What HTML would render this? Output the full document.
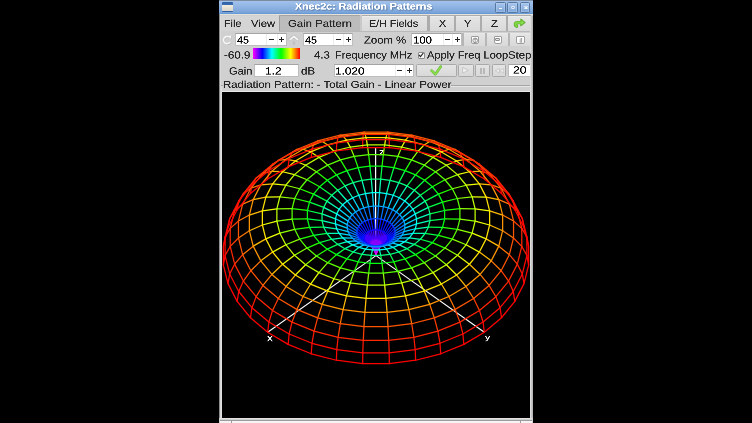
<!DOCTYPE html>
<html><head><meta charset="utf-8">
<style>
html,body{margin:0;padding:0;background:#000;width:752px;height:423px;overflow:hidden;position:relative;font-family:"Liberation Sans",sans-serif;}
.a{position:absolute;box-sizing:border-box;}
.t{position:absolute;white-space:nowrap;line-height:1;transform-origin:0 0;will-change:transform;text-rendering:geometricPrecision;-webkit-text-stroke:0.7px currentColor;}
.tb{top:2px;width:10.6px;height:10.6px;border:1px solid #56759f;background:linear-gradient(#a7c6ee,#7ea6d9);border-radius:1.5px;box-shadow:inset 0 0 0 0.6px rgba(200,220,250,.6);}
.bf{background:linear-gradient(#e4e4e4,#d9d9d9);}
.btn{background:linear-gradient(#e4e4e4,#d8d8d8);border:1px solid #a9a9a9;border-radius:1.5px;}
.ent{background:#fff;border:1px solid #bdbdbd;border-top-color:#a4a4a4;}
.sep{position:absolute;top:0;bottom:0;width:1px;background:#ececec;}
.mi{position:absolute;height:1.2px;width:5.2px;background:#1e1e1e;}
.pv{position:absolute;width:1.2px;height:5.2px;background:#1e1e1e;}
.ico{position:absolute;box-sizing:border-box;width:8.4px;height:8.5px;background:#fff;border:0.8px solid #9d9d9d;border-radius:1px 1px 2px 2px;}
</style></head><body>
<!-- window body -->
<div class="a" style="left:219px;top:0;width:314px;height:423px;background:#d0d0d0"></div>
<!-- title bar -->
<div class="a" style="left:219px;top:0;width:314px;height:14.3px;background:linear-gradient(#7d8ba0 0,#7d8ba0 6%,#a2c2ec 8%,#8fb3e2 50%,#7ba5d9 88%,#6096d8 100%)"></div>
<div class="a" style="left:219px;top:14.3px;width:314px;height:1.2px;background:#e6e2da"></div>
<div class="a" style="left:222px;top:2.4px;width:10.6px;height:9.4px;background:linear-gradient(#2f60a6 0,#3a6cb2 27%,#f4ede0 29%,#dbd5ca 88%,#2f60a6 90%);border-radius:1px"></div>
<div class="a tb" style="left:495.1px"></div>
<div class="a tb" style="left:507.4px"></div>
<div class="a tb" style="left:519.9px"></div>
<div class="a" style="left:498.7px;top:7.6px;width:3.4px;height:1.5px;background:#f2f4f8"></div>
<div class="a" style="left:510.7px;top:5.9px;width:3.9px;height:3px;border:1.1px solid #f2f4f8;border-radius:1.2px"></div>
<svg class="a" style="left:523.6px;top:5.7px" width="4" height="3.6" viewBox="0 0 4 3.6"><path d="M0.4 0.3L3.6 3.3M3.6 0.3L0.4 3.3" stroke="#f2f4f8" stroke-width="1.3"/></svg>

<!-- row 1 -->
<div class="a" style="left:219px;top:15.5px;width:60px;height:15.9px;background:#d5d5d5"></div>
<div class="a" style="left:279.1px;top:15.4px;width:252px;height:16.2px;background:#acacac"></div>
<div class="a" style="left:279.1px;top:15.4px;width:80.9px;height:15.9px;background:#bcbcbc;border-left:1px solid #9b9b9b;border-top:1px solid #a4a4a4;border-radius:1.5px"></div>
<div class="a" style="left:360px;top:15.4px;width:2.2px;height:15.9px;background:#c9c9c9"></div>
<div class="a bf" style="left:362.2px;top:15.5px;width:65.1px;height:15.4px;border-top:1px solid #ececec"></div>
<div class="a bf" style="left:429.6px;top:15.5px;width:24.1px;height:15.4px;border-top:1px solid #ececec"></div>
<div class="a bf" style="left:456px;top:15.5px;width:23.7px;height:15.4px;border-top:1px solid #ececec"></div>
<div class="a bf" style="left:482px;top:15.5px;width:23.7px;height:15.4px;border-top:1px solid #ececec"></div>
<div class="a bf" style="left:508.2px;top:15.5px;width:22.8px;height:15.4px;border-top:1px solid #ececec"></div>
<div class="a" style="left:279px;top:31.3px;width:252px;height:1px;background:#b9b9b9"></div>
<svg class="a" style="left:508px;top:15px" width="20" height="15" viewBox="0 0 20 15"><path d="M8.6 11.2 C6.6 9.8 6.8 7.6 10 7.6 L13.6 7.6" fill="none" stroke="#55a622" stroke-width="3.3" stroke-linecap="round"/><path d="M12.8 3.9 L17.3 7.5 L12.8 11.1Z" fill="#6cc430" stroke="#55a622" stroke-width="0.8" stroke-linejoin="round"/><path d="M8.6 11.2 C6.6 9.8 6.8 7.6 10 7.6 L13.6 7.6" fill="none" stroke="#80d844" stroke-width="2.1" stroke-linecap="round"/><path d="M13.4 5.6 L15.8 7.5 L13.4 9.4Z" fill="#8ee058"/></svg>

<!-- row 2 -->
<svg class="a" style="left:219px;top:32px" width="16" height="16" viewBox="0 0 16 16"><g transform="translate(0.35,0.45)" opacity="0.55"><path d="M9.9 5 A3.6 3.6 0 1 0 11.2 9.9" fill="none" stroke="#a0a0a0" stroke-width="1.9"/><path d="M8.9 4 L12.4 3.4 L11.8 7Z" fill="#a0a0a0"/></g><path d="M9.9 5 A3.6 3.6 0 1 0 11.2 9.9" fill="none" stroke="#f7f7f7" stroke-width="1.6"/><path d="M8.9 4 L12.4 3.4 L11.8 7Z" fill="#f7f7f7"/></svg>
<div class="a ent" style="left:234.9px;top:32.9px;width:51.8px;height:13px"><div class="sep" style="left:30.4px"></div><div class="sep" style="left:40.7px"></div></div>
<div class="mi" style="left:268.7px;top:39.3px"></div><div class="mi" style="left:279px;top:39.3px"></div><div class="pv" style="left:281px;top:37.3px"></div>
<svg class="a" style="left:286px;top:32px" width="16" height="16" viewBox="0 0 16 16"><path d="M4.2 7.6 L7.95 4.3 L11.7 7.6" fill="none" stroke="#b4b4b4" stroke-width="2.7" stroke-linecap="round" stroke-linejoin="round"/><path d="M4.2 7.6 L7.95 4.3 L11.7 7.6" fill="none" stroke="#fafafa" stroke-width="1.6" stroke-linecap="round" stroke-linejoin="round"/><path d="M6.7 10.5 L7.95 9.4 L9.2 10.5" fill="none" stroke="#b9b9b9" stroke-width="1"/><rect x="6.9" y="11.2" width="2.1" height="1.1" fill="#b3b3b3"/></svg>
<div class="a ent" style="left:302.6px;top:32.8px;width:50.2px;height:12.9px"><div class="sep" style="left:29.7px"></div><div class="sep" style="left:39.9px"></div></div>
<div class="mi" style="left:335.6px;top:39.3px"></div><div class="mi" style="left:345.9px;top:39.3px"></div><div class="pv" style="left:347.9px;top:37.3px"></div>
<div class="a ent" style="left:411.3px;top:32.8px;width:51px;height:13.2px"><div class="sep" style="left:30.3px"></div><div class="sep" style="left:40.1px"></div></div>
<div class="mi" style="left:444.7px;top:39.3px"></div><div class="mi" style="left:454.7px;top:39.3px"></div><div class="pv" style="left:456.7px;top:37.3px"></div>
<div class="a" style="left:462.2px;top:32.6px;width:69px;height:13.8px;background:#b6b6b6"></div>
<div class="a bf" style="left:463.9px;top:32.6px;width:21.1px;height:13.5px;border-top:1px solid #e9e9e9"></div>
<div class="a bf" style="left:486.8px;top:32.6px;width:21.2px;height:13.5px;border-top:1px solid #e9e9e9"></div>
<div class="a bf" style="left:509.9px;top:32.6px;width:21.1px;height:13.5px;border-top:1px solid #e9e9e9"></div>
<div class="ico" style="left:470.5px;top:35.7px"></div>
<div class="ico" style="left:493.5px;top:35.7px"></div>
<div class="ico" style="left:516.4px;top:35.7px"></div>
<svg class="a" style="left:471.5px;top:36.6px" width="6.4" height="6.4" viewBox="0 0 6.4 6.4"><circle cx="3.2" cy="3.4" r="2.3" fill="none" stroke="#8a8a8a" stroke-width="0.9"/><path d="M3.2 1.5V6M1.9 2.9L3.2 1.5L4.5 2.9" fill="none" stroke="#8a8a8a" stroke-width="0.8"/></svg>
<div class="a" style="left:495.2px;top:38.3px;width:5px;height:2.6px;border:0.8px solid #8a8a8a;border-radius:1px;background:#e6e6e6"></div>
<svg class="a" style="left:517.6px;top:36.6px" width="6.4" height="6.4" viewBox="0 0 6.4 6.4"><path d="M2.2 5.8V2.6L3.6 1M3.6 1V5.8" fill="none" stroke="#8a8a8a" stroke-width="0.8"/></svg>

<!-- row 3 -->
<div class="a" style="left:253.3px;top:48.2px;width:46.3px;height:11.1px;background:linear-gradient(90deg,#ff00ff,#0000ff 20%,#00ffff 40%,#00ff00 60%,#ffff00 80%,#ff0000)"></div>
<div class="a" style="left:417.5px;top:51.6px;width:7.2px;height:7.3px;background:#f7f7f7;border:0.9px solid #8d8d8d;border-radius:1px"></div>
<svg class="a" style="left:418.2px;top:52.2px" width="6" height="6" viewBox="0 0 6 6"><path d="M0.9 2.9 L2.5 4.7 L5.3 1" fill="none" stroke="#1e1e1e" stroke-width="1.1"/></svg>

<!-- row 4 -->
<div class="a ent" style="left:253.8px;top:63.5px;width:45.5px;height:13.7px"></div>
<div class="a ent" style="left:333.6px;top:63.6px;width:80.1px;height:13px"><div class="sep" style="left:60px"></div><div class="sep" style="left:70.2px"></div></div>
<div class="mi" style="left:396.5px;top:69.9px"></div><div class="mi" style="left:406.7px;top:69.9px"></div><div class="pv" style="left:408.7px;top:67.9px"></div>
<div class="a btn" style="left:415.6px;top:63.6px;width:41.1px;height:13.6px"></div>
<svg class="a" style="left:429.6px;top:64.6px" width="12" height="11" viewBox="0 0 12 11"><path d="M1.6 5.6 L5.4 9.2 L10.8 1.6" fill="none" stroke="#62b02c" stroke-width="2.6" stroke-linejoin="round" stroke-linecap="round"/><path d="M1.6 5.6 L5.4 9.2 L10.8 1.6" fill="none" stroke="#8be04e" stroke-width="1.6" stroke-linejoin="round" stroke-linecap="round"/></svg>
<div class="a btn" style="left:458.3px;top:63.7px;width:15.7px;height:13.5px"></div>
<div class="a btn" style="left:475.1px;top:63.7px;width:15px;height:13.5px"></div>
<div class="a btn" style="left:491.6px;top:63.7px;width:14.6px;height:13.5px"></div>
<svg class="a" style="left:462px;top:67.3px" width="7" height="6.6" viewBox="0 0 7 6.6"><path d="M0.6 0.5 L6.4 3.3 L0.6 6.1Z" fill="#efefef" stroke="#b4b4b4" stroke-width="0.6"/></svg>
<div class="a" style="left:479.8px;top:68px;width:2px;height:5.6px;background:#efefef;border:0.5px solid #b8b8b8"></div>
<div class="a" style="left:483.3px;top:68px;width:2px;height:5.6px;background:#efefef;border:0.5px solid #b8b8b8"></div>
<svg class="a" style="left:494.8px;top:68.2px" width="9" height="5.4" viewBox="0 0 9 5.4"><path d="M4.3 0.4 L0.4 2.7 L4.3 5Z M8.6 0.4 L4.7 2.7 L8.6 5Z" fill="#efefef" stroke="#b4b4b4" stroke-width="0.5"/></svg>
<div class="a ent" style="left:508.4px;top:63.5px;width:22.9px;height:13.7px"></div>

<!-- frame -->
<div class="a" style="left:450.5px;top:84.6px;width:80px;height:1px;background:#a6a6a6"></div>
<div class="a" style="left:450.5px;top:85.6px;width:80px;height:1px;background:#e4e4e4"></div>
<div class="a" style="left:220px;top:84.6px;width:2.5px;height:1px;background:#a6a6a6"></div>
<div class="a" style="left:219px;top:14px;width:1px;height:409px;background:#8e8e8e"></div><div class="a" style="left:220px;top:15.5px;width:1px;height:407px;background:#dadada"></div><div class="a" style="left:220px;top:86px;width:2px;height:337px;background:linear-gradient(90deg,#d2d2d2,#e4e4e4)"></div>
<div class="a" style="left:530px;top:15.5px;width:3px;height:407.5px;background:linear-gradient(90deg,#e8e8e8,#c8c8c8 50%,#b0b0b0)"></div>
<div class="a" style="left:222px;top:91.2px;width:308px;height:1px;background:#e6e6e6"></div>
<div class="a" style="left:219px;top:418px;width:314px;height:5px;background:#d0d0d0"></div>
<div class="a" style="left:220px;top:418px;width:312px;height:1.4px;background:#e2e2e2"></div>
<div class="a" style="left:220px;top:420px;width:312px;height:0.6px;background:#9c9c9c"></div>
<div class="a" style="left:220px;top:420.6px;width:312px;height:2.4px;background:#f4f4f4"></div>
<div class="a" style="left:231.2px;top:420.6px;width:0.9px;height:2.4px;background:#9a9a9a"></div>
<div class="a" style="left:520.2px;top:420.6px;width:0.9px;height:2.4px;background:#9a9a9a"></div>
<div style="position:absolute;left:222px;top:92px;width:308px;height:326px;background:#000"></div><svg width="308" height="326" viewBox="0 0 308 326" style="position:absolute;left:222px;top:92px"><path stroke="#fff" stroke-width="1.1" d="M154.00 163.60L45.67 240.20M154.00 163.60L262.33 240.20"/><path stroke="#fff" stroke-width="1.2" d="M153.60 163.60L153.60 55.27"/></svg><div class="t" style="left:266.88px;top:333.40px;font-size:40.13px;color:#fff;transform:scale(0.29074,0.25)">x</div><div class="t" style="left:484.75px;top:334.01px;font-size:28.71px;color:#fff;transform:scale(0.35882,0.25)">y</div><div class="t" style="left:379.07px;top:147.30px;font-size:40.13px;color:#fff;transform:scale(0.26744,0.25)">z</div><svg width="308" height="326" viewBox="0 0 308 326" style="position:absolute;left:222px;top:92px"><g fill="none" stroke-width="1.25" stroke-linecap="round"><path stroke="#fa00ff" d="M154.00 163.60L153.93 162.83M154.00 163.60L153.94 162.84M154.00 163.60L153.96 162.85M154.00 163.60L153.97 162.85M154.00 163.60L153.99 162.85M154.00 163.60L154.01 162.85M154.00 163.60L154.03 162.85M154.00 163.60L154.04 162.85M154.00 163.60L154.06 162.84M154.00 163.60L154.07 162.83M154.00 163.60L154.08 162.82M154.00 163.60L154.09 162.81M154.00 163.60L154.10 162.80M154.00 163.60L154.10 162.79M154.00 163.60L154.10 162.77M154.00 163.60L154.10 162.76M154.00 163.60L154.09 162.75M154.00 163.60L154.08 162.74M154.00 163.60L154.07 162.73M154.00 163.60L154.06 162.72M154.00 163.60L154.04 162.72M154.00 163.60L154.03 162.71M154.00 163.60L154.01 162.71M154.00 163.60L153.99 162.71M154.00 163.60L153.97 162.71M154.00 163.60L153.96 162.72M154.00 163.60L153.94 162.72M154.00 163.60L153.93 162.73M154.00 163.60L153.92 162.74M154.00 163.60L153.91 162.75M154.00 163.60L153.90 162.76M154.00 163.60L153.90 162.77M154.00 163.60L153.90 162.79M154.00 163.60L153.90 162.80M154.00 163.60L153.91 162.81M154.00 163.60L153.92 162.82"/><path stroke="#e700ff" d="M153.93 162.83L153.43 160.78M153.94 162.84L153.54 160.85M153.96 162.85L153.66 160.90M153.97 162.85L153.79 160.93M153.99 162.85L153.93 160.95M154.01 162.85L154.07 160.95M154.03 162.85L154.21 160.93M154.04 162.85L154.34 160.90M154.06 162.84L154.46 160.85M154.07 162.83L154.57 160.78M154.08 162.82L154.66 160.71M154.09 162.81L154.73 160.62M154.10 162.80L154.77 160.53M154.10 162.79L154.80 160.43M154.10 162.77L154.80 160.33M154.10 162.76L154.77 160.24M154.09 162.75L154.73 160.14M154.08 162.74L154.66 160.06M154.07 162.73L154.57 159.98M154.06 162.72L154.46 159.92M154.04 162.72L154.34 159.87M154.03 162.71L154.21 159.84M154.01 162.71L154.07 159.82M153.99 162.71L153.93 159.82M153.97 162.71L153.79 159.84M153.96 162.72L153.66 159.87M153.94 162.72L153.54 159.92M153.93 162.73L153.43 159.98M153.92 162.74L153.34 160.06M153.91 162.75L153.27 160.14M153.90 162.76L153.23 160.24M153.90 162.77L153.20 160.33M153.90 162.79L153.20 160.43M153.90 162.80L153.23 160.53M153.91 162.81L153.27 160.62M153.92 162.82L153.34 160.71"/><path stroke="#c100ff" d="M153.43 160.78L152.12 157.92M153.54 160.85L152.48 158.13M153.66 160.90L152.88 158.29M153.79 160.93L153.31 158.40M153.93 160.95L153.77 158.46M154.07 160.95L154.23 158.46M154.21 160.93L154.69 158.40M154.34 160.90L155.12 158.29M154.46 160.85L155.52 158.13M154.57 160.78L155.88 157.92M154.66 160.71L156.18 157.67M154.73 160.62L156.41 157.38M154.77 160.53L156.57 157.08M154.80 160.43L156.65 156.75M154.80 160.33L156.65 156.43M154.77 160.24L156.57 156.10M154.73 160.14L156.41 155.80M154.66 160.06L156.18 155.51M154.57 159.98L155.88 155.26M154.46 159.92L155.52 155.05M154.34 159.87L155.12 154.89M154.21 159.84L154.69 154.78M154.07 159.82L154.23 154.72M153.93 159.82L153.77 154.72M153.79 159.84L153.31 154.78M153.66 159.87L152.88 154.89M153.54 159.92L152.48 155.05M153.43 159.98L152.12 155.26M153.34 160.06L151.82 155.51M153.27 160.14L151.59 155.80M153.23 160.24L151.43 156.10M153.20 160.33L151.35 156.43M153.20 160.43L151.35 156.75M153.23 160.53L151.43 157.08M153.27 160.62L151.59 157.38M153.34 160.71L151.82 157.67"/><path stroke="#8a00ff" d="M152.12 157.92L149.67 154.76M152.48 158.13L150.48 155.24M152.88 158.29L151.41 155.62M153.31 158.40L152.41 155.88M153.77 158.46L153.47 156.01M154.23 158.46L154.53 156.01M154.69 158.40L155.59 155.88M155.12 158.29L156.59 155.62M155.52 158.13L157.52 155.24M155.88 157.92L158.33 154.76M156.18 157.67L159.02 154.18M156.41 157.38L159.56 153.52M156.57 157.08L159.92 152.81M156.65 156.75L160.11 152.07M156.65 156.43L160.11 151.31M156.57 156.10L159.92 150.57M156.41 155.80L159.56 149.86M156.18 155.51L159.02 149.21M155.88 155.26L158.33 148.63M155.52 155.05L157.52 148.14M155.12 154.89L156.59 147.76M154.69 154.78L155.59 147.51M154.23 154.72L154.53 147.37M153.77 154.72L153.47 147.37M153.31 154.78L152.41 147.51M152.88 154.89L151.41 147.76M152.48 155.05L150.48 148.14M152.12 155.26L149.67 148.63M151.82 155.51L148.98 149.21M151.59 155.80L148.44 149.86M151.43 156.10L148.08 150.57M151.35 156.43L147.89 151.31M151.35 156.75L147.89 152.07M151.43 157.08L148.08 152.81M151.59 157.38L148.44 153.52M151.82 157.67L148.98 154.18"/><path stroke="#4300ff" d="M149.67 154.76L145.82 151.85M150.48 155.24L147.37 152.76M151.41 155.62L149.11 153.48M152.41 155.88L151.01 153.96M153.47 156.01L152.99 154.21M154.53 156.01L155.01 154.21M155.59 155.88L156.99 153.96M156.59 155.62L158.89 153.48M157.52 155.24L160.63 152.76M158.33 154.76L162.18 151.85M159.02 154.18L163.47 150.75M159.56 153.52L164.48 149.52M159.92 152.81L165.17 148.18M160.11 152.07L165.52 146.78M160.11 151.31L165.52 145.35M159.92 150.57L165.17 143.95M159.56 149.86L164.48 142.61M159.02 149.21L163.47 141.37M158.33 148.63L162.18 140.28M157.52 148.14L160.63 139.37M156.59 147.76L158.89 138.65M155.59 147.51L156.99 138.17M154.53 147.37L155.01 137.92M153.47 147.37L152.99 137.92M152.41 147.51L151.01 138.17M151.41 147.76L149.11 138.65M150.48 148.14L147.37 139.37M149.67 148.63L145.82 140.28M148.98 149.21L144.53 141.37M148.44 149.86L143.52 142.61M148.08 150.57L142.83 143.95M147.89 151.31L142.48 145.35M147.89 152.07L142.48 146.78M148.08 152.81L142.83 148.18M148.44 153.52L143.52 149.52M148.98 154.18L144.53 150.75"/><path stroke="#0012ff" d="M145.82 151.85L140.46 149.72M147.37 152.76L143.02 151.24M149.11 153.48L145.91 152.42M151.01 153.96L149.04 153.23M152.99 154.21L152.33 153.64M155.01 154.21L155.67 153.64M156.99 153.96L158.96 153.23M158.89 153.48L162.09 152.42M160.63 152.76L164.98 151.24M162.18 151.85L167.54 149.72M163.47 150.75L169.69 147.91M164.48 149.52L171.36 145.87M165.17 148.18L172.50 143.65M165.52 146.78L173.08 141.33M165.52 145.35L173.08 138.97M165.17 143.95L172.50 136.64M164.48 142.61L171.36 134.42M163.47 141.37L169.69 132.38M162.18 140.28L167.54 130.57M160.63 139.37L164.98 129.05M158.89 138.65L162.09 127.87M156.99 138.17L158.96 127.07M155.01 137.92L155.67 126.66M152.99 137.92L152.33 126.66M151.01 138.17L149.04 127.07M149.11 138.65L145.91 127.87M147.37 139.37L143.02 129.05M145.82 140.28L140.46 130.57M144.53 141.37L138.31 132.38M143.52 142.61L136.64 134.42M142.83 143.95L135.50 136.64M142.48 145.35L134.92 138.97M142.48 146.78L134.92 141.33M142.83 148.18L135.50 143.65M143.52 149.52L136.64 145.87M144.53 150.75L138.31 147.91"/><path stroke="#0072ff" d="M140.46 149.72L133.56 148.86M143.02 151.24L137.42 151.15M145.91 152.42L141.78 152.93M149.04 153.23L146.52 154.15M152.33 153.64L151.48 154.77M155.67 153.64L156.52 154.77M158.96 153.23L161.48 154.15M162.09 152.42L166.22 152.93M164.98 151.24L170.58 151.15M167.54 149.72L174.44 148.86M169.69 147.91L177.68 146.13M171.36 145.87L180.20 143.05M172.50 143.65L181.92 139.70M173.08 141.33L182.80 136.19M173.08 138.97L182.80 132.62M172.50 136.64L181.92 129.12M171.36 134.42L180.20 125.77M169.69 132.38L177.68 122.68M167.54 130.57L174.44 119.95M164.98 129.05L170.58 117.66M162.09 127.87L166.22 115.88M158.96 127.07L161.48 114.66M155.67 126.66L156.52 114.04M152.33 126.66L151.48 114.04M149.04 127.07L146.52 114.66M145.91 127.87L141.78 115.88M143.02 129.05L137.42 117.66M140.46 130.57L133.56 119.95M138.31 132.38L130.32 122.68M136.64 134.42L127.80 125.77M135.50 136.64L126.08 129.12M134.92 138.97L125.20 132.62M134.92 141.33L125.20 136.19M135.50 143.65L126.08 139.70M136.64 145.87L127.80 143.05M138.31 147.91L130.32 146.13"/><path stroke="#00daff" d="M133.56 148.86L125.23 149.66M137.42 151.15L130.66 152.88M141.78 152.93L136.80 155.39M146.52 154.15L143.47 157.10M151.48 154.77L150.45 157.97M156.52 154.77L157.55 157.97M161.48 154.15L164.53 157.10M166.22 152.93L171.20 155.39M170.58 151.15L177.34 152.88M174.44 148.86L182.77 149.66M177.68 146.13L187.33 145.81M180.20 143.05L190.88 141.47M181.92 139.70L193.30 136.76M182.80 136.19L194.53 131.82M182.80 132.62L194.53 126.81M181.92 129.12L193.30 121.87M180.20 125.77L190.88 117.15M177.68 122.68L187.33 112.81M174.44 119.95L182.77 108.97M170.58 117.66L177.34 105.75M166.22 115.88L171.20 103.24M161.48 114.66L164.53 101.52M156.52 114.04L157.55 100.65M151.48 114.04L150.45 100.65M146.52 114.66L143.47 101.52M141.78 115.88L136.80 103.24M137.42 117.66L130.66 105.75M133.56 119.95L125.23 108.97M130.32 122.68L120.67 112.81M127.80 125.77L117.12 117.15M126.08 129.12L114.70 121.87M125.20 132.62L113.47 126.81M125.20 136.19L113.47 131.82M126.08 139.70L114.70 136.76M127.80 143.05L117.12 141.47M130.32 146.13L120.67 145.81"/><path stroke="#00ffb7" d="M125.23 149.66L115.70 152.38M130.66 152.88L122.93 156.67M136.80 155.39L131.11 160.01M143.47 157.10L139.98 162.29M150.45 157.97L149.28 163.45M157.55 157.97L158.72 163.45M164.53 157.10L168.02 162.29M171.20 155.39L176.89 160.01M177.34 152.88L185.07 156.67M182.77 149.66L192.30 152.38M187.33 145.81L198.37 147.27M190.88 141.47L203.09 141.49M193.30 136.76L206.32 135.21M194.53 131.82L207.96 128.64M194.53 126.81L207.96 121.96M193.30 121.87L206.32 115.39M190.88 117.15L203.09 109.11M187.33 112.81L198.37 103.33M182.77 108.97L192.30 98.22M177.34 105.75L185.07 93.93M171.20 103.24L176.89 90.59M164.53 101.52L168.02 88.31M157.55 100.65L158.72 87.15M150.45 100.65L149.28 87.15M143.47 101.52L139.98 88.31M136.80 103.24L131.11 90.59M130.66 105.75L122.93 93.93M125.23 108.97L115.70 98.22M120.67 112.81L109.63 103.33M117.12 117.15L104.91 109.11M114.70 121.87L101.68 115.39M113.47 126.81L100.04 121.96M113.47 131.82L100.04 128.64M114.70 136.76L101.68 135.21M117.12 141.47L104.91 141.49M120.67 145.81L109.63 147.27"/><path stroke="#00ff48" d="M115.70 152.38L105.30 157.17M122.93 156.67L114.50 162.63M131.11 160.01L124.89 166.87M139.98 162.29L136.18 169.78M149.28 163.45L148.00 171.25M158.72 163.45L160.00 171.25M168.02 162.29L171.82 169.78M176.89 160.01L183.11 166.87M185.07 156.67L193.50 162.63M192.30 152.38L202.70 157.17M198.37 147.27L210.41 150.67M203.09 141.49L216.42 143.32M206.32 135.21L220.52 135.34M207.96 128.64L222.61 126.98M207.96 121.96L222.61 118.49M206.32 115.39L220.52 110.13M203.09 109.11L216.42 102.16M198.37 103.33L210.41 94.81M192.30 98.22L202.70 88.30M185.07 93.93L193.50 82.85M176.89 90.59L183.11 78.60M168.02 88.31L171.82 75.70M158.72 87.15L160.00 74.23M149.28 87.15L148.00 74.23M139.98 88.31L136.18 75.70M131.11 90.59L124.89 78.60M122.93 93.93L114.50 82.85M115.70 98.22L105.30 88.30M109.63 103.33L97.59 94.81M104.91 109.11L91.58 102.16M101.68 115.39L87.48 110.13M100.04 121.96L85.39 118.49M100.04 128.64L85.39 126.98M101.68 135.21L87.48 135.34M104.91 141.49L91.58 143.32M109.63 147.27L97.59 150.67"/><path stroke="#25ff00" d="M105.30 157.17L94.46 164.01M114.50 162.63L105.70 170.68M124.89 166.87L118.41 175.87M136.18 169.78L132.21 179.42M148.00 171.25L146.66 181.22M160.00 171.25L161.34 181.22M171.82 169.78L175.79 179.42M183.11 166.87L189.59 175.87M193.50 162.63L202.30 170.68M202.70 157.17L213.54 164.01M210.41 150.67L222.98 156.06M216.42 143.32L230.32 147.07M220.52 135.34L235.34 137.32M222.61 126.98L237.89 127.10M222.61 118.49L237.89 116.72M220.52 110.13L235.34 106.50M216.42 102.16L230.32 96.74M210.41 94.81L222.98 87.75M202.70 88.30L213.54 79.80M193.50 82.85L202.30 73.13M183.11 78.60L189.59 67.94M171.82 75.70L175.79 64.39M160.00 74.23L161.34 62.59M148.00 74.23L146.66 62.59M136.18 75.70L132.21 64.39M124.89 78.60L118.41 67.94M114.50 82.85L105.70 73.13M105.30 88.30L94.46 79.80M97.59 94.81L85.02 87.75M91.58 102.16L77.68 96.74M87.48 110.13L72.66 106.50M85.39 118.49L70.11 116.72M85.39 126.98L70.11 127.10M87.48 135.34L72.66 137.32M91.58 143.32L77.68 147.07M97.59 150.67L85.02 156.06"/><path stroke="#8dff00" d="M94.46 164.01L83.64 172.73M105.70 170.68L96.93 180.61M118.41 175.87L111.95 186.75M132.21 179.42L128.25 190.94M146.66 181.22L145.33 193.07M161.34 181.22L162.67 193.07M175.79 179.42L179.75 190.94M189.59 175.87L196.05 186.75M202.30 170.68L211.07 180.61M213.54 164.01L224.36 172.73M222.98 156.06L235.51 163.33M230.32 147.07L244.18 152.71M235.34 137.32L250.12 141.19M237.89 127.10L253.13 129.11M237.89 116.72L253.13 116.84M235.34 106.50L250.12 104.77M230.32 96.74L244.18 93.24M222.98 87.75L235.51 82.62M213.54 79.80L224.36 73.22M202.30 73.13L211.07 65.34M189.59 67.94L196.05 59.21M175.79 64.39L179.75 55.01M161.34 62.59L162.67 52.88M146.66 62.59L145.33 52.88M132.21 64.39L128.25 55.01M118.41 67.94L111.95 59.21M105.70 73.13L96.93 65.34M94.46 79.80L83.64 73.22M85.02 87.75L72.49 82.62M77.68 96.74L63.82 93.24M72.66 106.50L57.88 104.77M70.11 116.72L54.87 116.84M70.11 127.10L54.87 129.11M72.66 137.32L57.88 141.19M77.68 147.07L63.82 152.71M85.02 156.06L72.49 163.33"/><path stroke="#edff00" d="M83.64 172.73L73.36 183.02M96.93 180.61L88.59 192.05M111.95 186.75L105.80 199.08M128.25 190.94L124.48 203.89M145.33 193.07L144.06 206.33M162.67 193.07L163.94 206.33M179.75 190.94L183.52 203.89M196.05 186.75L202.20 199.08M211.07 180.61L219.41 192.05M224.36 172.73L234.64 183.02M235.51 163.33L247.42 172.25M244.18 152.71L257.36 160.08M250.12 141.19L264.16 146.87M253.13 129.11L267.61 133.02M253.13 116.84L267.61 118.97M250.12 104.77L264.16 105.12M244.18 93.24L257.36 91.91M235.51 82.62L247.42 79.74M224.36 73.22L234.64 68.97M211.07 65.34L219.41 59.94M196.05 59.21L202.20 52.91M179.75 55.01L183.52 48.10M162.67 52.88L163.94 45.66M145.33 52.88L144.06 45.66M128.25 55.01L124.48 48.10M111.95 59.21L105.80 52.91M96.93 65.34L88.59 59.94M83.64 73.22L73.36 68.97M72.49 82.62L60.58 79.74M63.82 93.24L50.64 91.91M57.88 104.77L43.84 105.12M54.87 116.84L40.39 118.97M54.87 129.11L40.39 133.02M57.88 141.19L43.84 146.87M63.82 152.71L50.64 160.08M72.49 163.33L60.58 172.25"/><path stroke="#ffbc00" d="M73.36 183.02L64.11 194.44M88.59 192.05L81.09 204.52M105.80 199.08L100.28 212.35M124.48 203.89L121.10 217.71M144.06 206.33L142.92 220.43M163.94 206.33L165.08 220.43M183.52 203.89L186.90 217.71M202.20 199.08L207.72 212.35M219.41 192.05L226.91 204.52M234.64 183.02L243.89 194.44M247.42 172.25L258.13 182.44M257.36 160.08L269.21 168.87M264.16 146.87L276.79 154.15M267.61 133.02L280.64 138.72M267.61 118.97L280.64 123.05M264.16 105.12L276.79 107.62M257.36 91.91L269.21 92.90M247.42 79.74L258.13 79.33M234.64 68.97L243.89 67.32M219.41 59.94L226.91 57.25M202.20 52.91L207.72 49.42M183.52 48.10L186.90 44.06M163.94 45.66L165.08 41.34M144.06 45.66L142.92 41.34M124.48 48.10L121.10 44.06M105.80 52.91L100.28 49.42M88.59 59.94L81.09 57.25M73.36 68.97L64.11 67.32M60.58 79.74L49.87 79.33M50.64 91.91L38.79 92.90M43.84 105.12L31.21 107.62M40.39 118.97L27.36 123.05M40.39 133.02L27.36 138.72M43.84 146.87L31.21 154.15M50.64 160.08L38.79 168.87M60.58 172.25L49.87 182.44"/><path stroke="#ff7500" d="M64.11 194.44L56.37 206.47M81.09 204.52L74.81 217.41M100.28 212.35L95.65 225.92M121.10 217.71L118.27 231.74M142.92 220.43L141.97 234.70M165.08 220.43L166.03 234.70M186.90 217.71L189.73 231.74M207.72 212.35L212.35 225.92M226.91 204.52L233.19 217.41M243.89 194.44L251.63 206.47M258.13 182.44L267.10 193.44M269.21 168.87L279.13 178.70M276.79 154.15L287.36 162.71M280.64 138.72L291.54 145.95M280.64 123.05L291.54 128.93M276.79 107.62L287.36 112.17M269.21 92.90L279.13 96.18M258.13 79.33L267.10 81.44M243.89 67.32L251.63 68.41M226.91 57.25L233.19 57.47M207.72 49.42L212.35 48.96M186.90 44.06L189.73 43.14M165.08 41.34L166.03 40.18M142.92 41.34L141.97 40.18M121.10 44.06L118.27 43.14M100.28 49.42L95.65 48.96M81.09 57.25L74.81 57.47M64.11 67.32L56.37 68.41M49.87 79.33L40.90 81.44M38.79 92.90L28.87 96.18M31.21 107.62L20.64 112.17M27.36 123.05L16.46 128.93M27.36 138.72L16.46 145.95M31.21 154.15L20.64 162.71M38.79 168.87L28.87 178.70M49.87 182.44L40.90 193.44"/><path stroke="#ff3e00" d="M56.37 206.47L50.53 218.52M74.81 217.41L70.07 230.11M95.65 225.92L92.16 239.13M118.27 231.74L116.13 245.30M141.97 234.70L141.25 248.43M166.03 234.70L166.75 248.43M189.73 231.74L191.87 245.30M212.35 225.92L215.84 239.13M233.19 217.41L237.93 230.11M251.63 206.47L257.47 218.52M267.10 193.44L273.86 204.70M279.13 178.70L286.61 189.08M287.36 162.71L295.34 172.14M291.54 145.95L299.77 154.37M291.54 128.93L299.77 136.34M287.36 112.17L295.34 118.58M279.13 96.18L286.61 101.63M267.10 81.44L273.86 86.01M251.63 68.41L257.47 72.19M233.19 57.47L237.93 60.60M212.35 48.96L215.84 51.58M189.73 43.14L191.87 45.42M166.03 40.18L166.75 42.28M141.97 40.18L141.25 42.28M118.27 43.14L116.13 45.42M95.65 48.96L92.16 51.58M74.81 57.47L70.07 60.60M56.37 68.41L50.53 72.19M40.90 81.44L34.14 86.01M28.87 96.18L21.39 101.63M20.64 112.17L12.66 118.58M16.46 128.93L8.23 136.34M16.46 145.95L8.23 154.37M20.64 162.71L12.66 172.14M28.87 178.70L21.39 189.08M40.90 193.44L34.14 204.70"/><path stroke="#ff1800" d="M50.53 218.52L46.90 229.96M70.07 230.11L67.13 241.96M92.16 239.13L89.99 251.29M116.13 245.30L114.80 257.68M141.25 248.43L140.80 260.92M166.75 248.43L167.20 260.92M191.87 245.30L193.20 257.68M215.84 239.13L218.01 251.29M237.93 230.11L240.87 241.96M257.47 218.52L261.10 229.96M273.86 204.70L278.07 215.66M286.61 189.08L291.27 199.49M295.34 172.14L300.30 181.95M299.77 154.37L304.88 163.56M299.77 136.34L304.88 144.90M295.34 118.58L300.30 126.51M286.61 101.63L291.27 108.97M273.86 86.01L278.07 92.80M257.47 72.19L261.10 78.50M237.93 60.60L240.87 66.50M215.84 51.58L218.01 57.17M191.87 45.42L193.20 50.78M166.75 42.28L167.20 47.54M141.25 42.28L140.80 47.54M116.13 45.42L114.80 50.78M92.16 51.58L89.99 57.17M70.07 60.60L67.13 66.50M50.53 72.19L46.90 78.50M34.14 86.01L29.93 92.80M21.39 101.63L16.73 108.97M12.66 118.58L7.70 126.51M8.23 136.34L3.12 144.90M8.23 154.37L3.12 163.56M12.66 172.14L7.70 181.95M21.39 189.08L16.73 199.49M34.14 204.70L29.93 215.66"/><path stroke="#ff0500" d="M46.90 229.96L45.67 240.20M67.13 241.96L66.13 252.34M89.99 251.29L89.25 261.78M114.80 257.68L114.35 268.24M140.80 260.92L140.65 271.52M167.20 260.92L167.35 271.52M193.20 257.68L193.65 268.24M218.01 251.29L218.75 261.78M240.87 241.96L241.87 252.34M261.10 229.96L262.33 240.20M278.07 215.66L279.49 225.73M291.27 199.49L292.85 209.38M300.30 181.95L301.98 191.64M304.88 163.56L306.62 173.04M304.88 144.90L306.62 154.16M300.30 126.51L301.98 135.56M291.27 108.97L292.85 117.82M278.07 92.80L279.49 101.47M261.10 78.50L262.33 87.00M240.87 66.50L241.87 74.86M218.01 57.17L218.75 65.42M193.20 50.78L193.65 58.96M167.20 47.54L167.35 55.68M140.80 47.54L140.65 55.68M114.80 50.78L114.35 58.96M89.99 57.17L89.25 65.42M67.13 66.50L66.13 74.86M46.90 78.50L45.67 87.00M29.93 92.80L28.51 101.47M16.73 108.97L15.15 117.82M7.70 126.51L6.02 135.56M3.12 144.90L1.38 154.16M3.12 163.56L1.38 173.04M7.70 181.95L6.02 191.64M16.73 199.49L15.15 209.38M29.93 215.66L28.51 225.73"/><path stroke="#f500ff" d="M153.93 162.83L153.94 162.84M153.94 162.84L153.96 162.85M153.96 162.85L153.97 162.85M153.97 162.85L153.99 162.85M153.99 162.85L154.01 162.85M154.01 162.85L154.03 162.85M154.03 162.85L154.04 162.85M154.04 162.85L154.06 162.84M154.06 162.84L154.07 162.83M154.07 162.83L154.08 162.82M154.08 162.82L154.09 162.81M154.09 162.81L154.10 162.80M154.10 162.80L154.10 162.79M154.10 162.79L154.10 162.77M154.10 162.77L154.10 162.76M154.10 162.76L154.09 162.75M154.09 162.75L154.08 162.74M154.08 162.74L154.07 162.73M154.07 162.73L154.06 162.72M154.06 162.72L154.04 162.72M154.04 162.72L154.03 162.71M154.03 162.71L154.01 162.71M154.01 162.71L153.99 162.71M153.99 162.71L153.97 162.71M153.97 162.71L153.96 162.72M153.96 162.72L153.94 162.72M153.94 162.72L153.93 162.73M153.93 162.73L153.92 162.74M153.92 162.74L153.91 162.75M153.91 162.75L153.90 162.76M153.90 162.76L153.90 162.77M153.90 162.77L153.90 162.79M153.90 162.79L153.90 162.80M153.90 162.80L153.91 162.81M153.91 162.81L153.92 162.82M153.92 162.82L153.93 162.83"/><path stroke="#d900ff" d="M153.43 160.78L153.54 160.85M153.54 160.85L153.66 160.90M153.66 160.90L153.79 160.93M153.79 160.93L153.93 160.95M153.93 160.95L154.07 160.95M154.07 160.95L154.21 160.93M154.21 160.93L154.34 160.90M154.34 160.90L154.46 160.85M154.46 160.85L154.57 160.78M154.57 160.78L154.66 160.71M154.66 160.71L154.73 160.62M154.73 160.62L154.77 160.53M154.77 160.53L154.80 160.43M154.80 160.43L154.80 160.33M154.80 160.33L154.77 160.24M154.77 160.24L154.73 160.14M154.73 160.14L154.66 160.06M154.66 160.06L154.57 159.98M154.57 159.98L154.46 159.92M154.46 159.92L154.34 159.87M154.34 159.87L154.21 159.84M154.21 159.84L154.07 159.82M154.07 159.82L153.93 159.82M153.93 159.82L153.79 159.84M153.79 159.84L153.66 159.87M153.66 159.87L153.54 159.92M153.54 159.92L153.43 159.98M153.43 159.98L153.34 160.06M153.34 160.06L153.27 160.14M153.27 160.14L153.23 160.24M153.23 160.24L153.20 160.33M153.20 160.33L153.20 160.43M153.20 160.43L153.23 160.53M153.23 160.53L153.27 160.62M153.27 160.62L153.34 160.71M153.34 160.71L153.43 160.78"/><path stroke="#aa00ff" d="M152.12 157.92L152.48 158.13M152.48 158.13L152.88 158.29M152.88 158.29L153.31 158.40M153.31 158.40L153.77 158.46M153.77 158.46L154.23 158.46M154.23 158.46L154.69 158.40M154.69 158.40L155.12 158.29M155.12 158.29L155.52 158.13M155.52 158.13L155.88 157.92M155.88 157.92L156.18 157.67M156.18 157.67L156.41 157.38M156.41 157.38L156.57 157.08M156.57 157.08L156.65 156.75M156.65 156.75L156.65 156.43M156.65 156.43L156.57 156.10M156.57 156.10L156.41 155.80M156.41 155.80L156.18 155.51M156.18 155.51L155.88 155.26M155.88 155.26L155.52 155.05M155.52 155.05L155.12 154.89M155.12 154.89L154.69 154.78M154.69 154.78L154.23 154.72M154.23 154.72L153.77 154.72M153.77 154.72L153.31 154.78M153.31 154.78L152.88 154.89M152.88 154.89L152.48 155.05M152.48 155.05L152.12 155.26M152.12 155.26L151.82 155.51M151.82 155.51L151.59 155.80M151.59 155.80L151.43 156.10M151.43 156.10L151.35 156.43M151.35 156.43L151.35 156.75M151.35 156.75L151.43 157.08M151.43 157.08L151.59 157.38M151.59 157.38L151.82 157.67M151.82 157.67L152.12 157.92"/><path stroke="#6a00ff" d="M149.67 154.76L150.48 155.24M150.48 155.24L151.41 155.62M151.41 155.62L152.41 155.88M152.41 155.88L153.47 156.01M153.47 156.01L154.53 156.01M154.53 156.01L155.59 155.88M155.59 155.88L156.59 155.62M156.59 155.62L157.52 155.24M157.52 155.24L158.33 154.76M158.33 154.76L159.02 154.18M159.02 154.18L159.56 153.52M159.56 153.52L159.92 152.81M159.92 152.81L160.11 152.07M160.11 152.07L160.11 151.31M160.11 151.31L159.92 150.57M159.92 150.57L159.56 149.86M159.56 149.86L159.02 149.21M159.02 149.21L158.33 148.63M158.33 148.63L157.52 148.14M157.52 148.14L156.59 147.76M156.59 147.76L155.59 147.51M155.59 147.51L154.53 147.37M154.53 147.37L153.47 147.37M153.47 147.37L152.41 147.51M152.41 147.51L151.41 147.76M151.41 147.76L150.48 148.14M150.48 148.14L149.67 148.63M149.67 148.63L148.98 149.21M148.98 149.21L148.44 149.86M148.44 149.86L148.08 150.57M148.08 150.57L147.89 151.31M147.89 151.31L147.89 152.07M147.89 152.07L148.08 152.81M148.08 152.81L148.44 153.52M148.44 153.52L148.98 154.18M148.98 154.18L149.67 154.76"/><path stroke="#1b00ff" d="M145.82 151.85L147.37 152.76M147.37 152.76L149.11 153.48M149.11 153.48L151.01 153.96M151.01 153.96L152.99 154.21M152.99 154.21L155.01 154.21M155.01 154.21L156.99 153.96M156.99 153.96L158.89 153.48M158.89 153.48L160.63 152.76M160.63 152.76L162.18 151.85M162.18 151.85L163.47 150.75M163.47 150.75L164.48 149.52M164.48 149.52L165.17 148.18M165.17 148.18L165.52 146.78M165.52 146.78L165.52 145.35M165.52 145.35L165.17 143.95M165.17 143.95L164.48 142.61M164.48 142.61L163.47 141.37M163.47 141.37L162.18 140.28M162.18 140.28L160.63 139.37M160.63 139.37L158.89 138.65M158.89 138.65L156.99 138.17M156.99 138.17L155.01 137.92M155.01 137.92L152.99 137.92M152.99 137.92L151.01 138.17M151.01 138.17L149.11 138.65M149.11 138.65L147.37 139.37M147.37 139.37L145.82 140.28M145.82 140.28L144.53 141.37M144.53 141.37L143.52 142.61M143.52 142.61L142.83 143.95M142.83 143.95L142.48 145.35M142.48 145.35L142.48 146.78M142.48 146.78L142.83 148.18M142.83 148.18L143.52 149.52M143.52 149.52L144.53 150.75M144.53 150.75L145.82 151.85"/><path stroke="#0040ff" d="M140.46 149.72L143.02 151.24M143.02 151.24L145.91 152.42M145.91 152.42L149.04 153.23M149.04 153.23L152.33 153.64M152.33 153.64L155.67 153.64M155.67 153.64L158.96 153.23M158.96 153.23L162.09 152.42M162.09 152.42L164.98 151.24M164.98 151.24L167.54 149.72M167.54 149.72L169.69 147.91M169.69 147.91L171.36 145.87M171.36 145.87L172.50 143.65M172.50 143.65L173.08 141.33M173.08 141.33L173.08 138.97M173.08 138.97L172.50 136.64M172.50 136.64L171.36 134.42M171.36 134.42L169.69 132.38M169.69 132.38L167.54 130.57M167.54 130.57L164.98 129.05M164.98 129.05L162.09 127.87M162.09 127.87L158.96 127.07M158.96 127.07L155.67 126.66M155.67 126.66L152.33 126.66M152.33 126.66L149.04 127.07M149.04 127.07L145.91 127.87M145.91 127.87L143.02 129.05M143.02 129.05L140.46 130.57M140.46 130.57L138.31 132.38M138.31 132.38L136.64 134.42M136.64 134.42L135.50 136.64M135.50 136.64L134.92 138.97M134.92 138.97L134.92 141.33M134.92 141.33L135.50 143.65M135.50 143.65L136.64 145.87M136.64 145.87L138.31 147.91M138.31 147.91L140.46 149.72"/><path stroke="#00a4ff" d="M133.56 148.86L137.42 151.15M137.42 151.15L141.78 152.93M141.78 152.93L146.52 154.15M146.52 154.15L151.48 154.77M151.48 154.77L156.52 154.77M156.52 154.77L161.48 154.15M161.48 154.15L166.22 152.93M166.22 152.93L170.58 151.15M170.58 151.15L174.44 148.86M174.44 148.86L177.68 146.13M177.68 146.13L180.20 143.05M180.20 143.05L181.92 139.70M181.92 139.70L182.80 136.19M182.80 136.19L182.80 132.62M182.80 132.62L181.92 129.12M181.92 129.12L180.20 125.77M180.20 125.77L177.68 122.68M177.68 122.68L174.44 119.95M174.44 119.95L170.58 117.66M170.58 117.66L166.22 115.88M166.22 115.88L161.48 114.66M161.48 114.66L156.52 114.04M156.52 114.04L151.48 114.04M151.48 114.04L146.52 114.66M146.52 114.66L141.78 115.88M141.78 115.88L137.42 117.66M137.42 117.66L133.56 119.95M133.56 119.95L130.32 122.68M130.32 122.68L127.80 125.77M127.80 125.77L126.08 129.12M126.08 129.12L125.20 132.62M125.20 132.62L125.20 136.19M125.20 136.19L126.08 139.70M126.08 139.70L127.80 143.05M127.80 143.05L130.32 146.13M130.32 146.13L133.56 148.86"/><path stroke="#00ffee" d="M125.23 149.66L130.66 152.88M130.66 152.88L136.80 155.39M136.80 155.39L143.47 157.10M143.47 157.10L150.45 157.97M150.45 157.97L157.55 157.97M157.55 157.97L164.53 157.10M164.53 157.10L171.20 155.39M171.20 155.39L177.34 152.88M177.34 152.88L182.77 149.66M182.77 149.66L187.33 145.81M187.33 145.81L190.88 141.47M190.88 141.47L193.30 136.76M193.30 136.76L194.53 131.82M194.53 131.82L194.53 126.81M194.53 126.81L193.30 121.87M193.30 121.87L190.88 117.15M190.88 117.15L187.33 112.81M187.33 112.81L182.77 108.97M182.77 108.97L177.34 105.75M177.34 105.75L171.20 103.24M171.20 103.24L164.53 101.52M164.53 101.52L157.55 100.65M157.55 100.65L150.45 100.65M150.45 100.65L143.47 101.52M143.47 101.52L136.80 103.24M136.80 103.24L130.66 105.75M130.66 105.75L125.23 108.97M125.23 108.97L120.67 112.81M120.67 112.81L117.12 117.15M117.12 117.15L114.70 121.87M114.70 121.87L113.47 126.81M113.47 126.81L113.47 131.82M113.47 131.82L114.70 136.76M114.70 136.76L117.12 141.47M117.12 141.47L120.67 145.81M120.67 145.81L125.23 149.66"/><path stroke="#00ff80" d="M115.70 152.38L122.93 156.67M122.93 156.67L131.11 160.01M131.11 160.01L139.98 162.29M139.98 162.29L149.28 163.45M149.28 163.45L158.72 163.45M158.72 163.45L168.02 162.29M168.02 162.29L176.89 160.01M176.89 160.01L185.07 156.67M185.07 156.67L192.30 152.38M192.30 152.38L198.37 147.27M198.37 147.27L203.09 141.49M203.09 141.49L206.32 135.21M206.32 135.21L207.96 128.64M207.96 128.64L207.96 121.96M207.96 121.96L206.32 115.39M206.32 115.39L203.09 109.11M203.09 109.11L198.37 103.33M198.37 103.33L192.30 98.22M192.30 98.22L185.07 93.93M185.07 93.93L176.89 90.59M176.89 90.59L168.02 88.31M168.02 88.31L158.72 87.15M158.72 87.15L149.28 87.15M149.28 87.15L139.98 88.31M139.98 88.31L131.11 90.59M131.11 90.59L122.93 93.93M122.93 93.93L115.70 98.22M115.70 98.22L109.63 103.33M109.63 103.33L104.91 109.11M104.91 109.11L101.68 115.39M101.68 115.39L100.04 121.96M100.04 121.96L100.04 128.64M100.04 128.64L101.68 135.21M101.68 135.21L104.91 141.49M104.91 141.49L109.63 147.27M109.63 147.27L115.70 152.38"/><path stroke="#00ff11" d="M105.30 157.17L114.50 162.63M114.50 162.63L124.89 166.87M124.89 166.87L136.18 169.78M136.18 169.78L148.00 171.25M148.00 171.25L160.00 171.25M160.00 171.25L171.82 169.78M171.82 169.78L183.11 166.87M183.11 166.87L193.50 162.63M193.50 162.63L202.70 157.17M202.70 157.17L210.41 150.67M210.41 150.67L216.42 143.32M216.42 143.32L220.52 135.34M220.52 135.34L222.61 126.98M222.61 126.98L222.61 118.49M222.61 118.49L220.52 110.13M220.52 110.13L216.42 102.16M216.42 102.16L210.41 94.81M210.41 94.81L202.70 88.30M202.70 88.30L193.50 82.85M193.50 82.85L183.11 78.60M183.11 78.60L171.82 75.70M171.82 75.70L160.00 74.23M160.00 74.23L148.00 74.23M148.00 74.23L136.18 75.70M136.18 75.70L124.89 78.60M124.89 78.60L114.50 82.85M114.50 82.85L105.30 88.30M105.30 88.30L97.59 94.81M97.59 94.81L91.58 102.16M91.58 102.16L87.48 110.13M87.48 110.13L85.39 118.49M85.39 118.49L85.39 126.98M85.39 126.98L87.48 135.34M87.48 135.34L91.58 143.32M91.58 143.32L97.59 150.67M97.59 150.67L105.30 157.17"/><path stroke="#5bff00" d="M94.46 164.01L105.70 170.68M105.70 170.68L118.41 175.87M118.41 175.87L132.21 179.42M132.21 179.42L146.66 181.22M146.66 181.22L161.34 181.22M161.34 181.22L175.79 179.42M175.79 179.42L189.59 175.87M189.59 175.87L202.30 170.68M202.30 170.68L213.54 164.01M213.54 164.01L222.98 156.06M222.98 156.06L230.32 147.07M230.32 147.07L235.34 137.32M235.34 137.32L237.89 127.10M237.89 127.10L237.89 116.72M237.89 116.72L235.34 106.50M235.34 106.50L230.32 96.74M230.32 96.74L222.98 87.75M222.98 87.75L213.54 79.80M213.54 79.80L202.30 73.13M202.30 73.13L189.59 67.94M189.59 67.94L175.79 64.39M175.79 64.39L161.34 62.59M161.34 62.59L146.66 62.59M146.66 62.59L132.21 64.39M132.21 64.39L118.41 67.94M118.41 67.94L105.70 73.13M105.70 73.13L94.46 79.80M94.46 79.80L85.02 87.75M85.02 87.75L77.68 96.74M77.68 96.74L72.66 106.50M72.66 106.50L70.11 116.72M70.11 116.72L70.11 127.10M70.11 127.10L72.66 137.32M72.66 137.32L77.68 147.07M77.68 147.07L85.02 156.06M85.02 156.06L94.46 164.01"/><path stroke="#bfff00" d="M83.64 172.73L96.93 180.61M96.93 180.61L111.95 186.75M111.95 186.75L128.25 190.94M128.25 190.94L145.33 193.07M145.33 193.07L162.67 193.07M162.67 193.07L179.75 190.94M179.75 190.94L196.05 186.75M196.05 186.75L211.07 180.61M211.07 180.61L224.36 172.73M224.36 172.73L235.51 163.33M235.51 163.33L244.18 152.71M244.18 152.71L250.12 141.19M250.12 141.19L253.13 129.11M253.13 129.11L253.13 116.84M253.13 116.84L250.12 104.77M250.12 104.77L244.18 93.24M244.18 93.24L235.51 82.62M235.51 82.62L224.36 73.22M224.36 73.22L211.07 65.34M211.07 65.34L196.05 59.21M196.05 59.21L179.75 55.01M179.75 55.01L162.67 52.88M162.67 52.88L145.33 52.88M145.33 52.88L128.25 55.01M128.25 55.01L111.95 59.21M111.95 59.21L96.93 65.34M96.93 65.34L83.64 73.22M83.64 73.22L72.49 82.62M72.49 82.62L63.82 93.24M63.82 93.24L57.88 104.77M57.88 104.77L54.87 116.84M54.87 116.84L54.87 129.11M54.87 129.11L57.88 141.19M57.88 141.19L63.82 152.71M63.82 152.71L72.49 163.33M72.49 163.33L83.64 172.73"/><path stroke="#ffe400" d="M73.36 183.02L88.59 192.05M88.59 192.05L105.80 199.08M105.80 199.08L124.48 203.89M124.48 203.89L144.06 206.33M144.06 206.33L163.94 206.33M163.94 206.33L183.52 203.89M183.52 203.89L202.20 199.08M202.20 199.08L219.41 192.05M219.41 192.05L234.64 183.02M234.64 183.02L247.42 172.25M247.42 172.25L257.36 160.08M257.36 160.08L264.16 146.87M264.16 146.87L267.61 133.02M267.61 133.02L267.61 118.97M267.61 118.97L264.16 105.12M264.16 105.12L257.36 91.91M257.36 91.91L247.42 79.74M247.42 79.74L234.64 68.97M234.64 68.97L219.41 59.94M219.41 59.94L202.20 52.91M202.20 52.91L183.52 48.10M183.52 48.10L163.94 45.66M163.94 45.66L144.06 45.66M144.06 45.66L124.48 48.10M124.48 48.10L105.80 52.91M105.80 52.91L88.59 59.94M88.59 59.94L73.36 68.97M73.36 68.97L60.58 79.74M60.58 79.74L50.64 91.91M50.64 91.91L43.84 105.12M43.84 105.12L40.39 118.97M40.39 118.97L40.39 133.02M40.39 133.02L43.84 146.87M43.84 146.87L50.64 160.08M50.64 160.08L60.58 172.25M60.58 172.25L73.36 183.02"/><path stroke="#ff9500" d="M64.11 194.44L81.09 204.52M81.09 204.52L100.28 212.35M100.28 212.35L121.10 217.71M121.10 217.71L142.92 220.43M142.92 220.43L165.08 220.43M165.08 220.43L186.90 217.71M186.90 217.71L207.72 212.35M207.72 212.35L226.91 204.52M226.91 204.52L243.89 194.44M243.89 194.44L258.13 182.44M258.13 182.44L269.21 168.87M269.21 168.87L276.79 154.15M276.79 154.15L280.64 138.72M280.64 138.72L280.64 123.05M280.64 123.05L276.79 107.62M276.79 107.62L269.21 92.90M269.21 92.90L258.13 79.33M258.13 79.33L243.89 67.32M243.89 67.32L226.91 57.25M226.91 57.25L207.72 49.42M207.72 49.42L186.90 44.06M186.90 44.06L165.08 41.34M165.08 41.34L142.92 41.34M142.92 41.34L121.10 44.06M121.10 44.06L100.28 49.42M100.28 49.42L81.09 57.25M81.09 57.25L64.11 67.32M64.11 67.32L49.87 79.33M49.87 79.33L38.79 92.90M38.79 92.90L31.21 107.62M31.21 107.62L27.36 123.05M27.36 123.05L27.36 138.72M27.36 138.72L31.21 154.15M31.21 154.15L38.79 168.87M38.79 168.87L49.87 182.44M49.87 182.44L64.11 194.44"/><path stroke="#ff5500" d="M56.37 206.47L74.81 217.41M74.81 217.41L95.65 225.92M95.65 225.92L118.27 231.74M118.27 231.74L141.97 234.70M141.97 234.70L166.03 234.70M166.03 234.70L189.73 231.74M189.73 231.74L212.35 225.92M212.35 225.92L233.19 217.41M233.19 217.41L251.63 206.47M251.63 206.47L267.10 193.44M267.10 193.44L279.13 178.70M279.13 178.70L287.36 162.71M287.36 162.71L291.54 145.95M291.54 145.95L291.54 128.93M291.54 128.93L287.36 112.17M287.36 112.17L279.13 96.18M279.13 96.18L267.10 81.44M267.10 81.44L251.63 68.41M251.63 68.41L233.19 57.47M233.19 57.47L212.35 48.96M212.35 48.96L189.73 43.14M189.73 43.14L166.03 40.18M166.03 40.18L141.97 40.18M141.97 40.18L118.27 43.14M118.27 43.14L95.65 48.96M95.65 48.96L74.81 57.47M74.81 57.47L56.37 68.41M56.37 68.41L40.90 81.44M40.90 81.44L28.87 96.18M28.87 96.18L20.64 112.17M20.64 112.17L16.46 128.93M16.46 128.93L16.46 145.95M16.46 145.95L20.64 162.71M20.64 162.71L28.87 178.70M28.87 178.70L40.90 193.44M40.90 193.44L56.37 206.47"/><path stroke="#ff2600" d="M50.53 218.52L70.07 230.11M70.07 230.11L92.16 239.13M92.16 239.13L116.13 245.30M116.13 245.30L141.25 248.43M141.25 248.43L166.75 248.43M166.75 248.43L191.87 245.30M191.87 245.30L215.84 239.13M215.84 239.13L237.93 230.11M237.93 230.11L257.47 218.52M257.47 218.52L273.86 204.70M273.86 204.70L286.61 189.08M286.61 189.08L295.34 172.14M295.34 172.14L299.77 154.37M299.77 154.37L299.77 136.34M299.77 136.34L295.34 118.58M295.34 118.58L286.61 101.63M286.61 101.63L273.86 86.01M273.86 86.01L257.47 72.19M257.47 72.19L237.93 60.60M237.93 60.60L215.84 51.58M215.84 51.58L191.87 45.42M191.87 45.42L166.75 42.28M166.75 42.28L141.25 42.28M141.25 42.28L116.13 45.42M116.13 45.42L92.16 51.58M92.16 51.58L70.07 60.60M70.07 60.60L50.53 72.19M50.53 72.19L34.14 86.01M34.14 86.01L21.39 101.63M21.39 101.63L12.66 118.58M12.66 118.58L8.23 136.34M8.23 136.34L8.23 154.37M8.23 154.37L12.66 172.14M12.66 172.14L21.39 189.08M21.39 189.08L34.14 204.70M34.14 204.70L50.53 218.52"/><path stroke="#ff0a00" d="M46.90 229.96L67.13 241.96M67.13 241.96L89.99 251.29M89.99 251.29L114.80 257.68M114.80 257.68L140.80 260.92M140.80 260.92L167.20 260.92M167.20 260.92L193.20 257.68M193.20 257.68L218.01 251.29M218.01 251.29L240.87 241.96M240.87 241.96L261.10 229.96M261.10 229.96L278.07 215.66M278.07 215.66L291.27 199.49M291.27 199.49L300.30 181.95M300.30 181.95L304.88 163.56M304.88 163.56L304.88 144.90M304.88 144.90L300.30 126.51M300.30 126.51L291.27 108.97M291.27 108.97L278.07 92.80M278.07 92.80L261.10 78.50M261.10 78.50L240.87 66.50M240.87 66.50L218.01 57.17M218.01 57.17L193.20 50.78M193.20 50.78L167.20 47.54M167.20 47.54L140.80 47.54M140.80 47.54L114.80 50.78M114.80 50.78L89.99 57.17M89.99 57.17L67.13 66.50M67.13 66.50L46.90 78.50M46.90 78.50L29.93 92.80M29.93 92.80L16.73 108.97M16.73 108.97L7.70 126.51M7.70 126.51L3.12 144.90M3.12 144.90L3.12 163.56M3.12 163.56L7.70 181.95M7.70 181.95L16.73 199.49M16.73 199.49L29.93 215.66M29.93 215.66L46.90 229.96"/><path stroke="#ff0000" d="M45.67 240.20L66.13 252.34M66.13 252.34L89.25 261.78M89.25 261.78L114.35 268.24M114.35 268.24L140.65 271.52M140.65 271.52L167.35 271.52M167.35 271.52L193.65 268.24M193.65 268.24L218.75 261.78M218.75 261.78L241.87 252.34M241.87 252.34L262.33 240.20M262.33 240.20L279.49 225.73M279.49 225.73L292.85 209.38M292.85 209.38L301.98 191.64M301.98 191.64L306.62 173.04M306.62 173.04L306.62 154.16M306.62 154.16L301.98 135.56M301.98 135.56L292.85 117.82M292.85 117.82L279.49 101.47M279.49 101.47L262.33 87.00M262.33 87.00L241.87 74.86M241.87 74.86L218.75 65.42M218.75 65.42L193.65 58.96M193.65 58.96L167.35 55.68M167.35 55.68L140.65 55.68M140.65 55.68L114.35 58.96M114.35 58.96L89.25 65.42M89.25 65.42L66.13 74.86M66.13 74.86L45.67 87.00M45.67 87.00L28.51 101.47M28.51 101.47L15.15 117.82M15.15 117.82L6.02 135.56M6.02 135.56L1.38 154.16M1.38 154.16L1.38 173.04M1.38 173.04L6.02 191.64M6.02 191.64L15.15 209.38M15.15 209.38L28.51 225.73M28.51 225.73L45.67 240.20"/></g><g fill="none" stroke-width="1.25" stroke-linecap="round"></g></svg>
<div class="t" id="t0" style="left:294.79px;top:2.05px;font-size:37.79px;font-weight:bold;color:#ffffff;transform:scale(0.28041,0.25);text-shadow:3px 4px 4px rgba(30,50,90,.45)">Xnec2c: Radiation Patterns</div>
<div class="t" id="t1" style="left:224.34px;top:19.16px;font-size:38.95px;font-weight:normal;color:#262626;transform:scale(0.27688,0.25)">File</div>
<div class="t" id="t2" style="left:250.50px;top:19.16px;font-size:38.95px;font-weight:normal;color:#262626;transform:scale(0.28765,0.25)">View</div>
<div class="t" id="t3" style="left:288.02px;top:19.16px;font-size:38.95px;font-weight:normal;color:#262626;transform:scale(0.29224,0.25)">Gain Pattern</div>
<div class="t" id="t4" style="left:369.35px;top:19.16px;font-size:38.95px;font-weight:normal;color:#262626;transform:scale(0.27391,0.25)">E/H Fields</div>
<div class="t" id="t5" style="left:438.59px;top:19.09px;font-size:38.95px;font-weight:normal;color:#262626;transform:scale(0.27302,0.25)">X</div>
<div class="t" id="t6" style="left:463.96px;top:19.14px;font-size:38.95px;font-weight:normal;color:#262626;transform:scale(0.28326,0.25)">Y</div>
<div class="t" id="t7" style="left:490.84px;top:19.10px;font-size:38.95px;font-weight:normal;color:#262626;transform:scale(0.29101,0.25)">Z</div>
<div class="t" id="t8" style="left:237.39px;top:34.81px;font-size:40.70px;font-weight:normal;color:#000000;transform:scale(0.26240,0.25)">45</div>
<div class="t" id="t9" style="left:304.59px;top:34.81px;font-size:40.70px;font-weight:normal;color:#000000;transform:scale(0.26240,0.25)">45</div>
<div class="t" id="t10" style="left:364.05px;top:34.82px;font-size:40.70px;font-weight:normal;color:#262626;transform:scale(0.27819,0.25)">Zoom %</div>
<div class="t" id="t11" style="left:412.93px;top:34.88px;font-size:40.70px;font-weight:normal;color:#000000;transform:scale(0.27864,0.25)">100</div>
<div class="t" id="t12" style="left:223.77px;top:49.97px;font-size:41.28px;font-weight:normal;color:#262626;transform:scale(0.28049,0.25)">-60.9</div>
<div class="t" id="t13" style="left:314.17px;top:49.97px;font-size:41.28px;font-weight:normal;color:#262626;transform:scale(0.27586,0.25)">4.3</div>
<div class="t" id="t14" style="left:334.72px;top:50.10px;font-size:41.28px;font-weight:normal;color:#262626;transform:scale(0.26568,0.25)">Frequency MHz</div>
<div class="t" id="t15" style="left:426.51px;top:50.30px;font-size:41.28px;font-weight:normal;color:#262626;transform:scale(0.26787,0.25)">Apply Freq Loop</div>
<div class="t" id="t16" style="left:507.59px;top:50.37px;font-size:41.28px;font-weight:normal;color:#262626;transform:scale(0.27525,0.25)">Step</div>
<div class="t" id="t17" style="left:228.73px;top:65.76px;font-size:41.28px;font-weight:normal;color:#262626;transform:scale(0.26773,0.25)">Gain</div>
<div class="t" id="t18" style="left:265.36px;top:65.86px;font-size:41.28px;font-weight:normal;color:#000000;transform:scale(0.28800,0.25)">1.2</div>
<div class="t" id="t19" style="left:300.75px;top:65.73px;font-size:41.28px;font-weight:normal;color:#262626;transform:scale(0.27867,0.25)">dB</div>
<div class="t" id="t20" style="left:335.01px;top:65.68px;font-size:40.70px;font-weight:normal;color:#000000;transform:scale(0.28977,0.25)">1.020</div>
<div class="t" id="t21" style="left:512.90px;top:65.37px;font-size:41.28px;font-weight:normal;color:#000000;transform:scale(0.29348,0.25)">20</div>
<div class="t" id="t22" style="left:222.89px;top:79.76px;font-size:38.95px;font-weight:normal;color:#262626;transform:scale(0.29101,0.25)">Radiation Pattern: - Total Gain - Linear Power</div>
</body></html>
